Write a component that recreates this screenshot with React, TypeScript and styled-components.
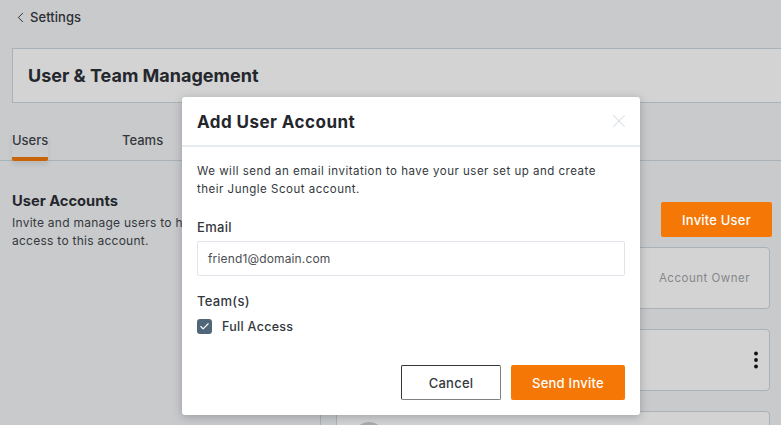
import React from 'react';
import styled, { createGlobalStyle } from 'styled-components';
import { ChevronLeft, X, Check } from 'lucide-react';

const GlobalStyle = createGlobalStyle`
  html, body {
    margin: 0;
    padding: 0;
    height: 100%;
    overflow: hidden;
    background: #c9cacc;
    font-family: Inter, 'Noto Sans', sans-serif;
  }
  * { box-sizing: border-box; }
`;

const Page = styled.div`
  width: 781px;
  height: 425px;
  padding: 0 11px 0 12px;
  background: #c9cacc;
  overflow: hidden;
`;

const BackLink = styled.div`
  display: flex;
  align-items: center;
  gap: 1px;
  height: 48px;
  padding: 0 0 14px 0;
  font-size: 13px;
  font-weight: 500;
  letter-spacing: 0.05px;
  color: #2b2e33;
`;

const TitleCard = styled.div`
  height: 55px;
  margin-right: -11px;
  padding-left: 15px;
  display: flex;
  align-items: center;
  background: #d3d3d3;
  border: 1px solid #a9b2b8;
  border-right: 0;
`;

const Title = styled.h1`
  margin: 0;
  font-size: 18px;
  font-weight: 700;
  color: #24272c;
`;

const Tabs = styled.div`
  display: flex;
  height: 58px;
  margin: 0 -11px 0 -12px;
  padding: 29px 0 0 12px;
  border-bottom: 1px solid #a9b2b8;
`;

const Tab = styled.div<{ $active?: boolean }>`
  width: ${(p) => (p.$active ? '36px' : 'auto')};
  margin-right: ${(p) => (p.$active ? '74px' : '0')};
  height: 29px;
  font-size: 13px;
  font-weight: 500;
  line-height: 16px;
  color: #34383d;
  border-bottom: ${(p) => (p.$active ? '4px solid #c96508' : '0')};
  border-radius: 0 0 2px 2px;
  box-shadow: ${(p) => (p.$active ? '0 4px 5px rgba(0,0,0,.08)' : 'none')};
`;

const Content = styled.div`
  display: grid;
  grid-template-columns: 309px 1fr;
`;

const Intro = styled.div`
  padding-top: 31px;
  height: 264px;
  border-right: 1px solid #a9b2b8;
`;

const IntroTitle = styled.h2`
  margin: 0 0 3px;
  font-size: 14.7px;
  font-weight: 700;
  line-height: 19px;
  color: #24272c;
`;

const IntroText = styled.p`
  margin: 0;
  width: 300px;
  font-size: 12px;
  line-height: 18px;
  letter-spacing: 0.26px;
  color: #34383d;
`;

const Users = styled.div`
  padding: 41px 0 0 15px;
  display: flex;
  flex-direction: column;
  align-items: flex-end;
`;

const InviteButton = styled.button`
  width: 111px;
  height: 35px;
  margin: 0 -2px 10px 0;
  border: 0;
  border-radius: 2px;
  background: #f57706;
  color: #fff;
  font: 500 13px Inter, sans-serif;
  letter-spacing: 0.2px;
`;

const UserCard = styled.div`
  width: 100%;
  flex: 0 0 62px;
  margin-bottom: 20px;
  padding: 0 10px 0 16px;
  display: flex;
  align-items: center;
  justify-content: flex-end;
  background: #d3d3d3;
  border: 1px solid #a9b2b8;
  border-radius: 4px;
`;

const AvatarCard = styled(UserCard)`
  align-items: flex-start;
  justify-content: flex-start;
  padding-top: 10px;
`;

const Avatar = styled.div`
  width: 32px;
  height: 32px;
  border-radius: 50%;
  background: #a4abae;
`;

const Role = styled.span`
  padding-right: 9px;
  font-size: 11.5px;
  letter-spacing: 0.5px;
  color: #85878a;
`;

const Dots = styled.svg`
  width: 6px;
  height: 18px;
`;

const Overlay = styled.div`
  position: absolute;
  left: 182px;
  top: 97px;
  width: 458px;
  height: 318px;
  display: flex;
  flex-direction: column;
  background: #fff;
  border-radius: 3px;
  box-shadow: 0 2px 10px rgba(40, 50, 60, 0.3);
`;

const ModalHeader = styled.div`
  flex: 0 0 50px;
  padding: 1px 10px 0 15px;
  display: flex;
  align-items: center;
  justify-content: space-between;
  border-bottom: 2px solid #e6ebf0;
`;

const ModalTitle = styled.h3`
  margin: 0;
  font-size: 17px;
  font-weight: 700;
  letter-spacing: 0.45px;
  color: #24272c;
`;

const CloseIcon = styled(X)`
  margin-top: -2px;
  color: #d5dce1;
`;

const ModalBody = styled.div`
  flex: 1;
  padding: 15px 15px 15px;
  display: flex;
  flex-direction: column;
`;

const Description = styled.p`
  margin: 0 0 21px;
  font-size: 11.5px;
  line-height: 18px;
  letter-spacing: 0.5px;
  color: #34383d;
`;

const Label = styled.label`
  display: block;
  font-size: 13px;
  font-weight: 500;
  line-height: 16px;
  letter-spacing: 0.3px;
  color: #34383d;
`;

const EmailInput = styled.div`
  height: 35px;
  margin: 6px 0 17px;
  padding-left: 10px;
  display: flex;
  align-items: center;
  font-size: 12px;
  letter-spacing: 0.15px;
  color: #4a4e53;
  border: 1px solid #dfe5ea;
  border-radius: 2px;
`;

const CheckRow = styled.div`
  display: flex;
  align-items: center;
  gap: 10px;
  margin-top: 10px;
  font-size: 12.5px;
  font-weight: 500;
  letter-spacing: 0.3px;
  color: #34383d;
`;

const CheckBox = styled.span`
  width: 15px;
  height: 15px;
  display: flex;
  align-items: center;
  justify-content: center;
  background: #4f6778;
  border-radius: 3px;
  color: #fff;
`;

const Actions = styled.div`
  margin-top: auto;
  display: flex;
  justify-content: flex-end;
  gap: 10px;
`;

const Button = styled.button<{ $primary?: boolean }>`
  height: 35px;
  width: ${(p) => (p.$primary ? '114px' : '100px')};
  border: ${(p) => (p.$primary ? '0' : '1px solid')};
  border-color: #33363a #7f8082 #7f8082 #33363a;
  border-radius: 2px;
  background: ${(p) => (p.$primary ? '#f57706' : '#fff')};
  color: ${(p) => (p.$primary ? '#fff' : '#34383d')};
  font: 500 13px Inter, sans-serif;
  letter-spacing: 0.25px;
`;

const App: React.FC = () => {
  return (
    <>
      <GlobalStyle />
      <Page>
        <BackLink>
          <ChevronLeft size={17} strokeWidth={1.4} />
          Settings
        </BackLink>
        <TitleCard>
          <Title>User &amp; Team Management</Title>
        </TitleCard>
        <Tabs>
          <Tab $active>Users</Tab>
          <Tab>Teams</Tab>
        </Tabs>
        <Content>
          <Intro>
            <IntroTitle>User Accounts</IntroTitle>
            <IntroText>
              Invite and manage users to have
              <br />
              access to this account.
            </IntroText>
          </Intro>
          <Users>
            <InviteButton>Invite User</InviteButton>
            <UserCard>
              <Role>Account Owner</Role>
            </UserCard>
            <UserCard>
              <Dots viewBox="0 0 6 18">
                <circle cx="3" cy="2.5" r="1.9" fill="#111" />
                <circle cx="3" cy="9" r="1.9" fill="#111" />
                <circle cx="3" cy="15.5" r="1.9" fill="#111" />
              </Dots>
            </UserCard>
            <AvatarCard>
              <Avatar />
            </AvatarCard>
          </Users>
        </Content>
      </Page>
      <Overlay>
        <ModalHeader>
          <ModalTitle>Add User Account</ModalTitle>
          <CloseIcon size={22} strokeWidth={1.1} />
        </ModalHeader>
        <ModalBody>
          <Description>
            We will send an email invitation to have your user set up and create
            <br />
            their Jungle Scout account.
          </Description>
          <Label>Email</Label>
          <EmailInput>friend1@domain.com</EmailInput>
          <Label>Team(s)</Label>
          <CheckRow>
            <CheckBox>
              <Check size={11} strokeWidth={2.5} />
            </CheckBox>
            Full Access
          </CheckRow>
          <Actions>
            <Button>Cancel</Button>
            <Button $primary>Send Invite</Button>
          </Actions>
        </ModalBody>
      </Overlay>
    </>
  );
};

export default App;
